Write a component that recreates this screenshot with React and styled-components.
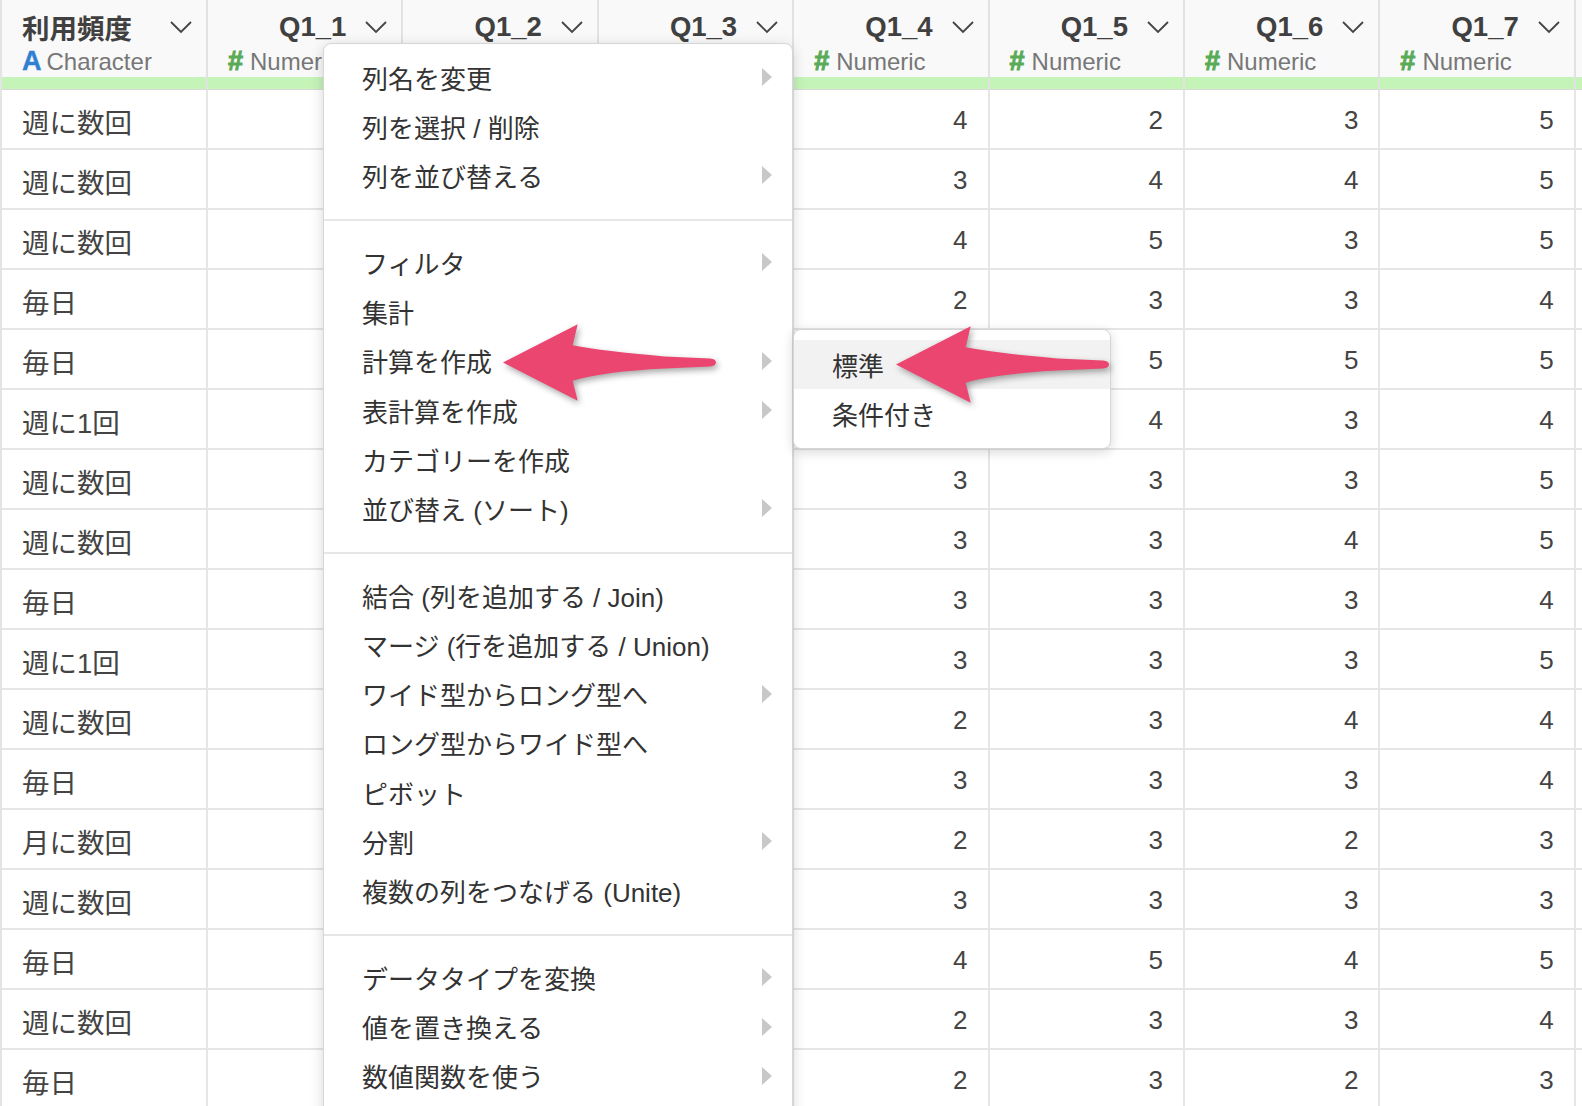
import React from "react";
import styled, { createGlobalStyle } from "styled-components";

const Global = createGlobalStyle`
  html, body {
    margin: 0;
    padding: 0;
    background: #fff;
    overflow: hidden;
  }
  body {
    font-family: "Liberation Sans", "Noto Sans CJK JP", sans-serif;
    color: #444;
  }
`;

const Page = styled.div`
  position: relative;
  width: 1582px;
  height: 1106px;
  overflow: hidden;
  background: #fff;
`;

const Table = styled.div`
  display: flex;
  flex-direction: column;
  border-left: 2px solid #e4e4e4;
`;

const Row = styled.div`
  display: grid;
  grid-template-columns: 206px repeat(7, 195.4px) 1fr;
`;

const HeadCell = styled.div`
  display: flex;
  flex-direction: column;
  background: #f9f9f9;
  border-right: 2px solid #e2e2e2;
  border-bottom: 1px solid #d8d8d8;
  height: 90px;
  box-sizing: border-box;
  position: relative;
  overflow: hidden;
  padding: 8px 13px 0 20px;

  &::after {
    content: "";
    position: absolute;
    left: 0;
    right: 0;
    bottom: 0;
    height: 12px;
    background: #c5f4b9;
  }
`;

const TitleLine = styled.div`
  display: flex;
  align-items: center;
  justify-content: ${({ $char }) => ($char ? "space-between" : "flex-end")};
  gap: 18px;
  height: 37px;
  font-size: 27.5px;
  font-weight: bold;
  color: #404040;
`;

const TypeLine = styled.div`
  display: flex;
  align-items: center;
  gap: 7px;
  height: 33px;
  font-size: 24px;
  color: #777;
  white-space: nowrap;
`;

const TypeMark = styled.span`
  font-weight: bold;
  font-size: 27px;
  color: ${({ $char }) => ($char ? "#2f80d1" : "#5aab57")};
  -webkit-text-stroke: ${({ $char }) => ($char ? "0.4px" : "1px")} currentColor;
  margin-right: ${({ $char }) => ($char ? "-2px" : "0")};
`;

const Cell = styled.div`
  height: 60px;
  box-sizing: border-box;
  border-right: 2px solid #e6e6e6;
  border-bottom: 2px solid #e6e6e6;
  display: flex;
  align-items: center;
  justify-content: ${({ $num }) => ($num ? "flex-end" : "flex-start")};
  padding: 3px 20px 0 20px;
  overflow: hidden;
  font-size: ${({ $num }) => ($num ? "26px" : "27.5px")};
  color: #444;
`;

const Menu = styled.div`
  position: absolute;
  left: 323px;
  top: 43px;
  width: 470px;
  height: 1120px;
  background: #fff;
  border: 1px solid #d6d6d6;
  border-radius: 8px;
  box-shadow: 0 3px 14px rgba(0, 0, 0, 0.16);
  box-sizing: border-box;
`;

const Group = styled.div`
  padding: ${({ $first }) => ($first ? "8.5px 0 18.8px" : "17px 0 18.8px")};
  border-top: ${({ $first }) => ($first ? "none" : "2px solid #e6e6e6")};
`;

const Item = styled.div`
  position: relative;
  height: 49.2px;
  display: flex;
  align-items: center;
  padding-left: 38px;
  font-size: 26px;
  color: #333;
  white-space: nowrap;
  background: ${({ $active }) => ($active ? "#f2f2f2" : "transparent")};
`;

const Caret = styled.span`
  position: absolute;
  right: 20px;
  top: 50%;
  margin-top: -9px;
  width: 0;
  height: 0;
  border-top: 9px solid transparent;
  border-bottom: 9px solid transparent;
  border-left: 10px solid #c8c8c8;
`;

const SubMenu = styled.div`
  position: absolute;
  left: 793px;
  top: 329px;
  width: 318px;
  padding: 10px 0;
  background: #fff;
  border: 1px solid #d6d6d6;
  border-radius: 8px;
  box-shadow: 0 3px 12px rgba(0, 0, 0, 0.16);
  box-sizing: border-box;
`;

const ArrowMark = styled.svg`
  position: absolute;
  left: ${({ $x }) => $x}px;
  top: ${({ $y }) => $y}px;
  overflow: visible;
  filter: drop-shadow(2px 3px 3px rgba(0, 0, 0, 0.35));
`;

const Chevron = () => (
  <svg width="24" height="14" viewBox="0 0 24 14">
    <polyline
      points="2,2 12,12 22,2"
      fill="none"
      stroke="#444"
      strokeWidth="1.8"
    />
  </svg>
);

const Arrow = ({ x, y }) => (
  <ArrowMark $x={x} $y={y} width="214" height="77" viewBox="0 0 212 76">
    <path
      d="M0 38 L74 0 L69 21 Q100 27 160 32 L205 34 Q211 34.5 211 38 Q211 41.5 205 42 L160 44 Q100 47 69 56 L74 76 Z"
      fill="#ea466f"
    />
  </ArrowMark>
);

const columns = [
  { name: "利用頻度", type: "Character" },
  { name: "Q1_1", type: "Numeric" },
  { name: "Q1_2", type: "Numeric" },
  { name: "Q1_3", type: "Numeric" },
  { name: "Q1_4", type: "Numeric" },
  { name: "Q1_5", type: "Numeric" },
  { name: "Q1_6", type: "Numeric" },
  { name: "Q1_7", type: "Numeric" },
];

const rows = [
  ["週に数回", 4, 3, 4, 4, 2, 3, 5],
  ["週に数回", 3, 4, 3, 3, 4, 4, 5],
  ["週に数回", 4, 4, 5, 4, 5, 3, 5],
  ["毎日", 3, 2, 3, 2, 3, 3, 4],
  ["毎日", 5, 5, 4, 5, 5, 5, 5],
  ["週に1回", 4, 3, 4, 4, 4, 3, 4],
  ["週に数回", 3, 3, 3, 3, 3, 3, 5],
  ["週に数回", 3, 4, 3, 3, 3, 4, 5],
  ["毎日", 3, 3, 4, 3, 3, 3, 4],
  ["週に1回", 3, 3, 3, 3, 3, 3, 5],
  ["週に数回", 2, 3, 4, 2, 3, 4, 4],
  ["毎日", 3, 3, 3, 3, 3, 3, 4],
  ["月に数回", 2, 2, 3, 2, 3, 2, 3],
  ["週に数回", 3, 3, 3, 3, 3, 3, 3],
  ["毎日", 4, 5, 4, 4, 5, 4, 5],
  ["週に数回", 2, 3, 3, 2, 3, 3, 4],
  ["毎日", 2, 3, 2, 2, 3, 2, 3],
  ["週に数回", 3, 3, 3, 3, 3, 3, 4],
];

const menuGroups = [
  [
    { label: "列名を変更", sub: true },
    { label: "列を選択 / 削除" },
    { label: "列を並び替える", sub: true },
  ],
  [
    { label: "フィルタ", sub: true },
    { label: "集計" },
    { label: "計算を作成", sub: true },
    { label: "表計算を作成", sub: true },
    { label: "カテゴリーを作成" },
    { label: "並び替え (ソート)", sub: true },
  ],
  [
    { label: "結合 (列を追加する / Join)" },
    { label: "マージ (行を追加する / Union)" },
    { label: "ワイド型からロング型へ", sub: true },
    { label: "ロング型からワイド型へ" },
    { label: "ピボット" },
    { label: "分割", sub: true },
    { label: "複数の列をつなげる (Unite)" },
  ],
  [
    { label: "データタイプを変換", sub: true },
    { label: "値を置き換える", sub: true },
    { label: "数値関数を使う", sub: true },
    { label: "文字列関数を使う", sub: true },
  ],
];

export default function App() {
  return (
    <Page>
      <Global />
      <Table>
        <Row>
          {columns.map((c, i) => {
            const isChar = c.type === "Character";
            return (
              <HeadCell key={i}>
                <TitleLine $char={isChar}>
                  <span>{c.name}</span>
                  <Chevron />
                </TitleLine>
                <TypeLine>
                  <TypeMark $char={isChar}>{isChar ? "A" : "#"}</TypeMark>
                  {c.type}
                </TypeLine>
              </HeadCell>
            );
          })}
          <HeadCell />
        </Row>
        {rows.map((r, i) => (
          <Row key={i}>
            {r.map((v, j) => (
              <Cell key={j} $num={j > 0}>
                {v}
              </Cell>
            ))}
            <Cell />
          </Row>
        ))}
      </Table>

      <Menu>
        {menuGroups.map((g, gi) => (
          <Group key={gi} $first={gi === 0}>
            {g.map((it) => (
              <Item key={it.label}>
                {it.label}
                {it.sub && <Caret />}
              </Item>
            ))}
          </Group>
        ))}
      </Menu>

      <SubMenu>
        <Item $active>標準</Item>
        <Item>条件付き</Item>
      </SubMenu>

      <Arrow x={503} y={324} />
      <Arrow x={896} y={326} />
    </Page>
  );
}
